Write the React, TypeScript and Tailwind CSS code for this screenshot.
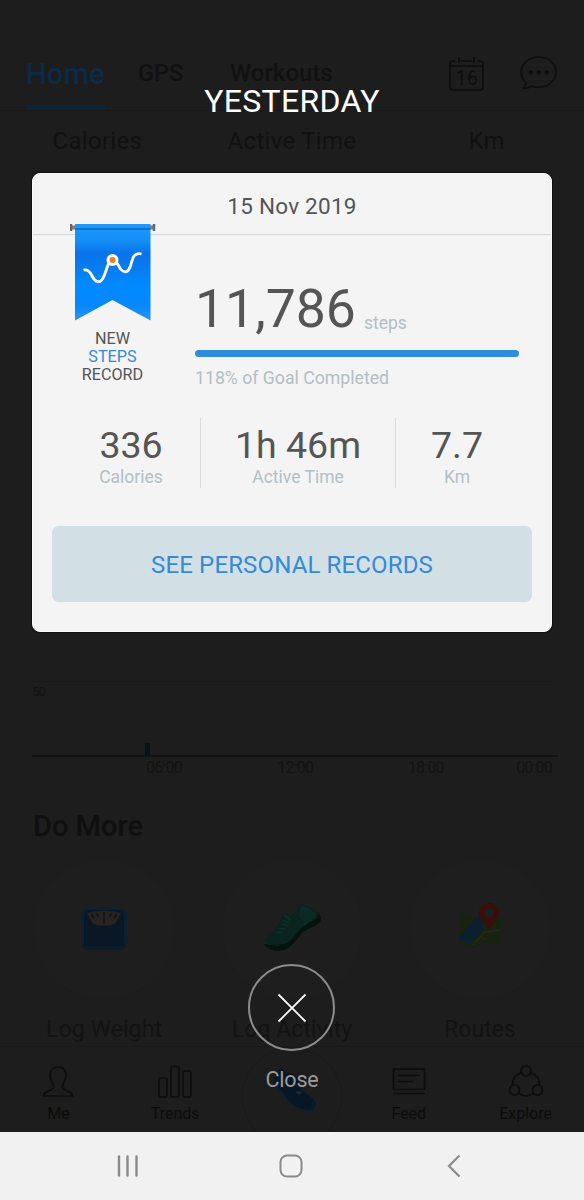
import type { ReactNode } from 'react';

const statLabels = ['Calories', 'Active Time', 'Km'];

function CalendarIcon() {
  return (
    <svg width="36" height="35" viewBox="0 0 36 35" fill="none" stroke="#0e0e0e" strokeWidth="1.7">
      <path d="M6 4H4a3 3 0 0 0-3 3v23a3 3 0 0 0 3 3h27a3 3 0 0 0 3-3V7a3 3 0 0 0-3-3h-2M12 4h11M1 9h33M10 0v6M25 0v6" />
      <text x="17.8" y="27.5" textAnchor="middle" fontSize="20" fontFamily="Roboto, sans-serif" fill="#0e0e0e" stroke="none">
        16
      </text>
    </svg>
  );
}

function ChatIcon() {
  return (
    <svg width="37" height="34" viewBox="0 0 37 34" fill="none" stroke="#0e0e0e" strokeWidth="1.7">
      <path d="M18.5 1C8.7 1 1.2 7.6 1.2 16c0 4.6 1.8 8.2 4.8 11 .2 2-1.2 3.6-2.6 5 3.2.4 6-.4 8-1.7 2.2.7 4.6 1 7.1 1C28.3 31.3 36 24.6 36 16S28.3 1 18.5 1Z" />
      <g fill="#0e0e0e" stroke="none">
        <circle cx="10.8" cy="16.5" r="2.3" />
        <circle cx="18.8" cy="16.5" r="2.3" />
        <circle cx="26.8" cy="16.5" r="2.3" />
      </g>
    </svg>
  );
}

function ScaleIcon() {
  return (
    <svg width="48" height="44" viewBox="0 0 48 44">
      <rect x="2" y="2" width="44" height="41" rx="5" fill="#0a1d2b" />
      <rect x="1" y="1" width="46" height="37" rx="5" fill="#0b2031" />
      <rect x="4" y="3" width="40" height="36" rx="4" fill="#091824" />
      <path d="M7 6c10-3 24-3 34 0l-6 11q-11 3-22 0Z" fill="#272422" />
      <path d="m11 7 3 4M17 6l1 4M37 7l-3 4M31 6l-1 4M24 5v12" stroke="#141414" strokeWidth="1.6" />
    </svg>
  );
}

function SneakerIcon() {
  return (
    <svg width="60" height="50" viewBox="0 0 60 50">
      <path d="M1 40c4 6 12 8 20 6 8-3 12-10 18-17 7-6 17-7 19-13 1-4-2-6-5-7L35 27 15 42Z" fill="#05120e" />
      <path d="M2 37c0-5 10-10 14-17 3-5 2-10 6-11 5 3 8 3 11-1 3-3 2-8 7-8 3 2 8 3 14 8 4 8-8 9-15 15-7 7-10 15-18 17-8 2-16 1-19-3Z" fill="#09231e" />
      <path d="m38 1 8 3 8 6-12 12-6-10Z" fill="#0a2a26" />
      <path d="m21 11 7 5M19 16l7 3M18 20l7 2M16 24l7 1M14 28l6 1" stroke="#19302a" strokeWidth="1.2" />
    </svg>
  );
}

function MapIcon() {
  return (
    <svg width="44" height="46" viewBox="0 0 44 46">
      <path d="m1 12 14 5 14-6 14 4v28l-14-3-14 6-14-6Z" fill="#17230f" />
      <path d="M1 34c7-3 4-9 12-12l4-6 8-2v12c-4 3-4 9-10 12l-4 4-10-4Z" fill="#0b202f" />
      <path d="m15 43 12-13 16-2M22 34l7 4" stroke="#26291a" strokeWidth="1.4" fill="none" />
      <path d="M31 28c-2-6-10-10-10-17a10 10 0 0 1 20 0c0 7-8 11-10 17Z" fill="#380d0a" />
      <circle cx="31" cy="11" r="5" fill="#1f1d1d" />
    </svg>
  );
}

function NavShoeIcon() {
  return (
    <svg width="44" height="48" viewBox="0 0 44 48">
      <path d="M4 7c3-5 6-4 8 0 3 3 7-1 10 3 4 5 2 11 8 16 4 4 12 7 13 13 0 7-7 8-13 6C17 42 14 31 4 21 0 17 1 11 4 7Z" fill="#081726" />
      <path d="M3 22c9 7 13 20 27 23 5 1 10 0 12-4" stroke="#0d2031" strokeWidth="1.6" fill="none" />
      <path d="m22 26 8 1-4 3Z" fill="#1b2a3a" />
    </svg>
  );
}

function NavItem({ label, children }: { label: string; children: ReactNode }) {
  return (
    <div className="flex w-1/5 flex-col items-center pt-[17px] text-[16px] leading-[20px] text-[#0c0c0c]">
      <svg width="38" height="36" viewBox="0 0 38 36" fill="none" stroke="#0d0d0d" strokeWidth="1.7" className="mb-[4px]">
        {children}
      </svg>
      {label}
    </div>
  );
}

function Stat({ value, label, className }: { value: string; label: string; className: string }) {
  return (
    <div className={`flex flex-col items-center pt-[3px] ${className}`}>
      <div className="text-[37.5px] leading-[48px] text-[#555]">{value}</div>
      <div className="mt-[-2px] text-[17.5px] leading-[20px] text-[#b2bfc6]">{label}</div>
    </div>
  );
}

function HomeScreen() {
  return (
    <div className="flex h-[1132px] flex-col bg-[#1d1d1d] text-[#111]">
      <header className="flex h-[111px] items-end border-b border-[#191919] pl-[26px]">
        <div className="w-[79px] border-b-[5px] border-[#0b2439] pb-[14px] text-[29px] leading-[34px] font-medium tracking-[0.2px] text-[#0c2b45]">
          Home
        </div>
        <div className="mb-[23px] ml-[33px] w-[92px] text-[23.5px] leading-[28px] font-medium">GPS</div>
        <div className="mb-[23px] w-[219px] text-[24px] leading-[28px] font-medium">Workouts</div>
        <div className="mb-[18px] w-[71px]"><CalendarIcon /></div>
        <div className="mb-[20px]"><ChatIcon /></div>
      </header>

      <div className="flex h-[60px] items-center text-center text-[24px]">
        {statLabels.map((label) => (
          <div key={label} className="w-1/3 tracking-[0.3px]">{label}</div>
        ))}
      </div>

      <div className="mx-[32px] mt-[510px] h-[95px]">
        <div className="h-[62px] border-t border-[#191919] pt-[2px] text-[13px] leading-[16px] tracking-[-0.8px] text-[#131313]">50</div>
        <div className="ml-[113px] h-[12px] w-[5px] bg-[#05121c]" />
        <div className="h-[2px] w-[526px] bg-[#121212]" />
        <div className="flex pt-px pl-[114px] text-[16px] leading-[20px] tracking-[-0.8px] text-[#131313]">
          <span className="w-[132px]">06:00</span>
          <span className="w-[131px]">12:00</span>
          <span className="w-[109px]">18:00</span>
          <span>00:00</span>
        </div>
      </div>

      <h2 className="mt-[32px] ml-[33px] text-[29px] leading-[36px] font-medium text-[#0f0f0f]">Do More</h2>
      <div className="flex h-[202px] px-[10px] pt-[15px] text-center text-[23px] tracking-[0.1px] text-[#131313]">
        <div className="flex w-1/3 flex-col items-center">
          <div className="flex size-[140px] items-center justify-center rounded-full bg-[#1e1e1e]"><ScaleIcon /></div>
          <div className="mt-[16px] leading-[30px]">Log Weight</div>
        </div>
        <div className="flex w-1/3 flex-col items-center">
          <div className="flex size-[140px] items-center justify-center rounded-full bg-[#1e1e1e] pl-[2px]"><SneakerIcon /></div>
          <div className="mt-[16px] leading-[30px]">Log Activity</div>
        </div>
        <div className="flex w-1/3 flex-col items-center">
          <div className="flex size-[140px] items-center justify-center rounded-full bg-[#1e1e1e] pb-[8px]"><MapIcon /></div>
          <div className="mt-[16px] leading-[30px]">Routes</div>
        </div>
      </div>

      <nav className="flex h-[86px] overflow-hidden border-t border-[#191919]">
        <NavItem label="Me">
          <path d="M4.5 32c0-5 8-4.5 10-8 .7-2-.5-3.5-1.500-5.5C9.5 12 10.5 3 19 3s9.5 9 6 15.500c-1 2-2.200 3.500-1.500 5.500 2 3.500 10 3 10 8Z" />
        </NavItem>
        <NavItem label="Trends">
          <rect x="3" y="14" width="8" height="19" rx="2" />
          <rect x="15" y="2.5" width="8" height="30.5" rx="2" />
          <rect x="27" y="7" width="8" height="26" rx="2" />
        </NavItem>
        <div className="flex w-1/5 justify-center">
          <div className="flex size-[100px] shrink-0 justify-center rounded-full border border-[#1a1a1a] pt-[17px] pl-[6px]">
            <NavShoeIcon />
          </div>
        </div>
        <NavItem label="Feed">
          <path d="M3.5 5h31v20.5h-31ZM3 29.5h32M8 11.5h22M8 17.5h15" />
        </NavItem>
        <NavItem label="Explore">
          <circle cx="19" cy="7" r="5" />
          <circle cx="7.5" cy="26" r="5" />
          <circle cx="30.5" cy="26" r="5" />
          <path d="M14 8.5C8 11 5 16 5.5 21.500M24 8.5c6 2.5 9 7.5 8.5 13M12 29.5q7 5 14 0" />
        </NavItem>
      </nav>
    </div>
  );
}

function RecordRibbon() {
  return (
    <svg width="86" height="98" viewBox="0 0 86 98" className="block">
      <defs>
        <linearGradient id="ribbon" x1="0" y1="0" x2="0" y2="1">
          <stop offset="0" stopColor="#2197f7" />
          <stop offset="0.16" stopColor="#1590f8" />
          <stop offset="0.31" stopColor="#0873ea" />
          <stop offset="0.5" stopColor="#087ff4" />
          <stop offset="0.62" stopColor="#0089ff" />
          <stop offset="0.85" stopColor="#0787fb" />
          <stop offset="1" stopColor="#2b96f5" />
        </linearGradient>
      </defs>
      <path d="M0 3.5h85" stroke="#808080" strokeWidth="4" />
      <path d="M1 0v7M84 0v7" stroke="#666" strokeWidth="2.5" />
      <path d="M5 0h75.500v96.500L42.500 76 5 96.500Z" fill="url(#ribbon)" />
      <path d="M5 5h75.500" stroke="#0873d8" strokeWidth="2" />
      <path d="M13.500 46c4-1 6 1 8 5 4 8 9 10 13 0 3-8 4-15 8-15s6 6 8 9c4 5 8 3 10-3 2-7 3-14 11-12" fill="none" stroke="#fff" strokeWidth="2.8" />
      <circle cx="42.500" cy="36" r="4.5" fill="#f57e1b" stroke="#fff" strokeWidth="3" />
    </svg>
  );
}

function RecordModal() {
  return (
    <div className="absolute inset-x-0 top-0 flex h-[1132px] flex-col items-center">
      <h1 className="mt-[81px] text-[32px] leading-[40px] tracking-[0.3px] text-white">YESTERDAY</h1>

      <div className="mt-[52px] h-[459px] w-[520px] rounded-[8px] border border-[#fafafa] bg-[#f4f4f4] shadow-[0_0_1px_1px_#101010]">
        <div className="h-[61px] border-b border-[#d5d9dc] pt-[17px] text-center text-[22.5px] leading-[30px] tracking-[0.25px] text-[#555]">
          15 Nov 2019
        </div>

        <div className="flex h-[183px]">
          <div className="mt-[-11px] ml-[37px] w-[86px] text-center text-[16.2px] leading-[18px] text-[#555]">
            <RecordRibbon />
            <div className="mt-[8px] -ml-px">NEW</div>
            <div className="-ml-px text-[#348ad8]">STEPS</div>
            <div className="-ml-px">RECORD</div>
          </div>
          <div className="ml-[39px] w-[324px] pt-[42px]">
            <div className="flex text-[#555]">
              <span className="text-[53.5px] leading-[64px]">11,786</span>
              <span className="mt-[36px] ml-[8px] text-[17.5px] leading-[20px] text-[#b2bfc6]">steps</span>
            </div>
            <div className="mt-[9px] h-[7px] rounded-full bg-[#2f8bdc]" />
            <div className="mt-[11px] text-[17.7px] leading-[20px] text-[#b2bfc6]">118% of Goal Completed</div>
          </div>
        </div>

        <div className="flex h-[70px] pl-[29px]">
          <Stat value="336" label="Calories" className="w-[138px]" />
          <Stat value="1h 46m" label="Active Time" className="w-[196px] border-x-[1.5px] border-[#d8dcdf]" />
          <Stat value="7.7" label="Km" className="w-[122px]" />
        </div>

        <button className="mt-[38px] ml-[19px] block h-[76px] w-[480px] rounded-[7px] bg-[#d2e0e5] pt-[2px] text-[24px] leading-[30px] tracking-[0.14px] text-[#348ad8]">
          SEE PERSONAL RECORDS
        </button>
      </div>

      <button className="mt-[332px] mr-px flex size-[87px] items-center justify-center rounded-full border-[2px] border-[#8c8c8c]" aria-label="Close">
        <svg width="30" height="30" viewBox="0 0 30 30" stroke="#f5f5f5" strokeWidth="1.8">
          <path d="m1.5 1.5 27 27M28.5 1.5l-27 27" />
        </svg>
      </button>
      <div className="mt-[15px] text-[21.5px] leading-[28px] tracking-[-0.2px] text-[#9b9b9b]">Close</div>
    </div>
  );
}

function SystemBar() {
  return (
    <div className="flex h-[68px] items-center bg-[#f1f1f1] pl-[116px]">
      <svg width="24" height="24" viewBox="0 0 24 24" fill="none" stroke="#8a8a8a" strokeWidth="2.4" strokeLinecap="round">
        <path d="M3 2.5v19M11.5 2.5v19M20.5 2.5v19" />
      </svg>
      <svg width="24" height="24" viewBox="0 0 24 24" fill="none" stroke="#8a8a8a" strokeWidth="2" className="ml-[139px]">
        <rect x="1.5" y="1.5" width="21" height="21" rx="6.5" />
      </svg>
      <svg width="16" height="24" viewBox="0 0 16 24" fill="none" stroke="#8a8a8a" strokeWidth="2.2" className="ml-[143px]">
        <path d="M13.5 1.5 3 12l10.5 10.5" />
      </svg>
    </div>
  );
}

export default function App() {
  return (
    <div className="relative h-[1200px] w-[584px] overflow-hidden font-['Roboto',sans-serif]">
      <HomeScreen />
      <SystemBar />
      <RecordModal />
    </div>
  );
}
